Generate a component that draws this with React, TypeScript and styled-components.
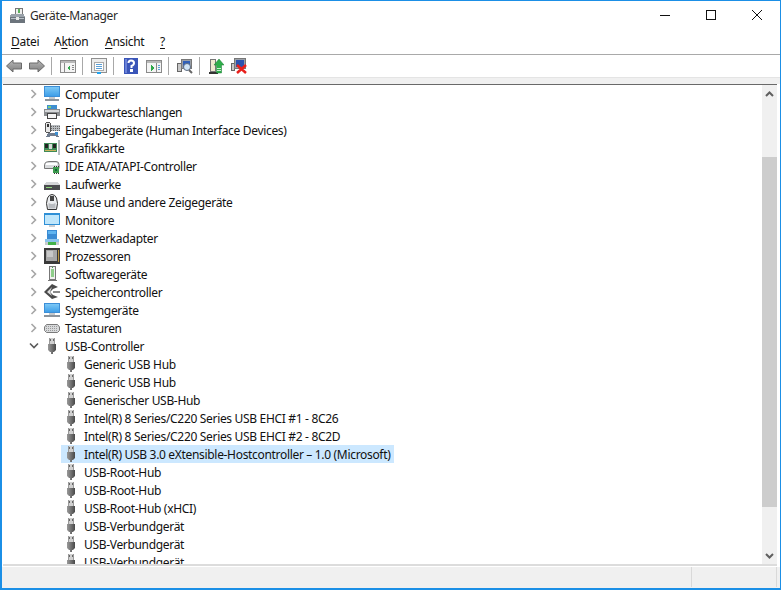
import React from "react";
import styled, { createGlobalStyle } from "styled-components";

const Global = createGlobalStyle`
  html, body { margin: 0; padding: 0; background: #fff; overflow: hidden; }
  #root { width: 781px; height: 590px; }
`;

const Window = styled.div`
  width: 781px; height: 590px; box-sizing: border-box;
  border: 1px solid #1b8fe6; border-width: 1px 1px 2px 2px;
  display: flex; flex-direction: column; background: #fff;
  font-family: "Noto Sans", "Open Sans", sans-serif; font-size: 12px; color: #000; overflow: hidden;
`;
const TitleBar = styled.div`
  height: 30px; flex: none; box-sizing: border-box; padding: 0 0 2px 7px; display: flex; align-items: center;
`;
const TitleText = styled.span`
  margin-left: 4px; color: #2b2b2b; flex: 1; letter-spacing: -0.38px;
`;
const WinButton = styled.div`
  width: 46px; height: 28px; display: flex; align-items: center; justify-content: center;
`;
const MenuBar = styled.div`
  height: 23px; flex: none; display: flex; align-items: center; border-bottom: 1px solid #a9a9a9; padding-left: 9px; padding-bottom: 1px; box-sizing: content-box; margin-top: -1px;
`;
const MenuItem = styled.span<{ $w: number }>`
  width: ${p => p.$w}px; letter-spacing: -0.3px; color: #111;
  u { text-underline-offset: 2px; }
`;
const ToolBar = styled.div`
  height: 22px; flex: none; display: flex; align-items: center; padding-left: 4px;
`;
const ToolIcon = styled.div<{ $ml?: number }>`
  width: 16px; height: 16px; margin-left: ${p => p.$ml ?? 0}px; display: flex;
`;
const ToolSep = styled.div<{ $ml: number }>`
  width: 1px; height: 18px; background: #a8a8a8; margin-left: ${p => p.$ml}px;
`;
const Strip = styled.div`
  height: 7px; flex: none; background: #f0f0f0; border-top: 1px solid #e4e4e4; box-sizing: border-box;
`;
const Body = styled.div`
  flex: 1; min-height: 0; display: flex; margin-left: 1px; margin-right: 3px;
  border-top: 1px solid #696969;
  border-bottom: 2px solid #dcdcdc;
`;
const Tree = styled.div`
  flex: 1; min-width: 0; overflow: hidden;
`;
const Row = styled.div<{ $child?: boolean }>`
  height: 18px; display: flex; align-items: center; white-space: nowrap;
  padding-left: ${p => (p.$child ? 58 : 23)}px;
`;
const Chevron = styled.div`
  width: 16px; height: 18px; flex: none; display: flex; align-items: center; justify-content: center;
`;
const RowBody = styled.div<{ $sel?: boolean }>`
  display: flex; align-items: center; height: 18px; padding-right: 4px;
  padding-left: 2px;
  background: ${p => (p.$sel ? "#cce8ff" : "transparent")};
`;
const RowIcon = styled.div`
  width: 17px; height: 16px; flex: none; display: flex;
`;
const Label = styled.span`
  margin-left: 4px; letter-spacing: -0.32px; color: #111;
`;
const ScrollBar = styled.div`
  width: 15px; flex: none; background: #f0f0f0; display: flex; flex-direction: column;
`;
const ScrollArrow = styled.div`
  height: 17px; flex: none; display: flex; align-items: center; justify-content: center;
`;
const ThumbGap = styled.div<{ $h: number }>`
  height: ${p => p.$h}px; flex: none;
`;
const Thumb = styled.div`
  flex: 1; background: #cdcdcd;
`;
const Status = styled.div`
  height: 22px; flex: none; background: #f0f0f0; border-top: 1px solid #fff; box-sizing: border-box; display: flex; justify-content: flex-end; padding-right: 3px;
`;
const StatusCell = styled.div<{ $w: number }>`
  width: ${p => p.$w}px; border-right: 1px solid #d9d9d9; border-left: 1px solid #d9d9d9; box-sizing: border-box; height: 20px;
`;

type P = { children: React.ReactNode };
const Ico = ({ children }: P) => (
  <svg width="16" height="16" viewBox="0 0 16 16" shapeRendering="crispEdges">{children}</svg>
);

const Defs = () => (
  <svg width="0" height="0" style={{ position: "absolute" }}>
    <defs>
      <linearGradient id="scr" x1="0" y1="0" x2="0" y2="1">
        <stop offset="0" stopColor="#7cc8f6" />
        <stop offset="1" stopColor="#3f9fe8" />
      </linearGradient>
      <linearGradient id="plug" x1="0" y1="0" x2="1" y2="0">
        <stop offset="0" stopColor="#9a9a9a" />
        <stop offset="0.5" stopColor="#727272" />
        <stop offset="1" stopColor="#484848" />
      </linearGradient>
      <linearGradient id="arrow" x1="0" y1="0" x2="0" y2="1">
        <stop offset="0" stopColor="#b8b8b8" />
        <stop offset="1" stopColor="#7e7e7e" />
      </linearGradient>
    </defs>
  </svg>
);

const icons: Record<string, React.ReactNode> = {
  computer: <><rect x="0" y="0" width="16" height="11" fill="#3c8fd8" /><rect x="1" y="1" width="14" height="9" fill="url(#scr)" /><rect x="5" y="11" width="6" height="2" fill="#c4c8cc" /><rect x="1" y="13" width="14" height="2" fill="#8c949c" /></>,
  printer: <><rect x="3" y="1" width="10" height="4" fill="#3f8fd0" /><rect x="4" y="2" width="3" height="2" fill="#7bd07b" /><rect x="0" y="5" width="16" height="7" fill="#8a8d90" /><rect x="1" y="6" width="14" height="2" fill="#d6d8da" /><rect x="3.500" y="9.500" width="9" height="5" fill="#f4f4f4" stroke="#444" strokeWidth="1" /></>,
  input: <><rect x="1.500" y="0.500" width="5" height="10" rx="2" fill="#e8e8e8" stroke="#555" /><rect x="3" y="2" width="2" height="3" fill="#333" /><rect x="7" y="3" width="9" height="6" fill="#b8bcc0" /><path d="M7 4.500h9M7 6.500h9M7 8.500h9" stroke="#666" strokeDasharray="1 1" /><path d="M4 11h9l2 4h-3l-1-1H6l-1 1H2z" fill="#6f7c8e" /><rect x="11" y="10" width="3" height="3" fill="#3f8fd0" /></>,
  gpu: <><rect x="0" y="3" width="13" height="9" fill="#3f8a58" /><rect x="1" y="4" width="3" height="4" fill="#222" /><rect x="5" y="4" width="3" height="5" fill="#d8d8d8" /><rect x="9" y="4" width="3" height="4" fill="#222" /><rect x="1" y="10" width="11" height="1" fill="#c9b45a" /><rect x="14" y="0" width="2" height="15" fill="#b8bcc0" /></>,
  ide: <><path d="M0.500 6.500 Q1 3.500 6 3.500 H12 Q15 3.500 15 6.500 V10.500 H0.500 Z" fill="#d8dadc" stroke="#777" shapeRendering="auto" /><rect x="2" y="5" width="11" height="2" fill="#fff" /><rect x="9" y="9" width="6" height="6" fill="#3c9a4e" /><path d="M10.500 9v-1M12.500 9v-1M14.500 9v-1M10.500 15v1M12.500 15v1M14.500 15v1" stroke="#333" /><rect x="11" y="11" width="2" height="2" fill="#163" /></>,
  drive: <><path d="M2 6h12l2 3H0z" fill="#d4d6d8" /><rect x="0" y="9" width="16" height="5" fill="#4a4c4e" /><rect x="2" y="11" width="6" height="1" fill="#8cd37a" /></>,
  mouse: <><path d="M3.500 15.500 Q1.500 9 3.500 4 Q5 0.500 8 0.500 Q11 0.500 12.500 4 Q14.500 9 12.500 15.500 Z" fill="#eceef0" stroke="#333" shapeRendering="auto" /><rect x="6" y="2" width="4" height="5" rx="1" fill="#444" /><path d="M4.500 9 Q8 11 11.500 9 V14.500 H4.500Z" fill="#b9bcc0" shapeRendering="auto" /></>,
  monitor: <><rect x="0" y="1" width="16" height="12" fill="#2e8fd6" /><rect x="1" y="3" width="14" height="9" fill="#bfe6fb" /><rect x="5" y="13" width="6" height="2" fill="#c9cdd1" /></>,
  network: <><rect x="3" y="0" width="10" height="9" fill="#3a8bd4" /><rect x="4" y="1" width="8" height="3" fill="#5fb4f0" /><rect x="1" y="9" width="14" height="3" fill="#8cc4ec" /><rect x="1" y="12" width="14" height="3" fill="#c8ccd0" /><rect x="4" y="12" width="8" height="3" fill="#43b24a" /></>,
  cpu: <><rect x="0" y="0" width="16" height="16" fill="#3a3a3a" /><rect x="2" y="2" width="11" height="11" fill="#a8a8a8" /><rect x="3" y="3" width="6" height="6" fill="#c8c8c8" /><rect x="14" y="2" width="1" height="12" fill="#b8923a" /></>,
  soft: <><rect x="5.500" y="0.500" width="6" height="13" fill="#f0f0f0" stroke="#777" /><rect x="7" y="3" width="3" height="8" fill="#8fce8a" /><rect x="8" y="1" width="1" height="1" fill="#4a4" /><rect x="4" y="14" width="9" height="1" fill="#777" /></>,
  storage: <><path d="M8 0 L14 3 L9 5 L6 8 L9 11 L14 13 L8 15 L0 8 Z" fill="#4a4a4a" shapeRendering="auto" /><rect x="9" y="7" width="7" height="2" fill="#8a8a8a" /><path d="M8 3 L3 8 L8 12 L6 8Z" fill="#ddd" shapeRendering="auto" /></>,
  system: <><rect x="0" y="1" width="16" height="10" fill="#3c8fd8" /><rect x="1" y="2" width="14" height="8" fill="url(#scr)" /><rect x="5" y="11" width="6" height="2" fill="#c4c8cc" /><rect x="0" y="13" width="16" height="2" fill="#8c949c" /></>,
  keyboard: <><path d="M2.500 4.500h11l2 2.500v3.500l-2 2h-11l-2-2V7z" fill="#d8dadc" stroke="#7a7a7a" shapeRendering="auto" /><path d="M2 6.500h12M2 8.500h12M2 10.500h12" stroke="#9a9a9a" strokeDasharray="1 1" /></>,
  usb: <><rect x="5" y="0" width="6" height="6" fill="#d0d0d0" /><rect x="5" y="0" width="1" height="6" fill="#9a9a9a" /><rect x="10" y="0" width="1" height="6" fill="#9a9a9a" /><rect x="6" y="1" width="1" height="2" fill="#666" /><rect x="9" y="1" width="1" height="2" fill="#666" /><path d="M4 6h8v6l-2 2H9v2H7v-2H6l-2-2z" fill="url(#plug)" shapeRendering="auto" /></>,
};

const tool: Record<string, React.ReactNode> = {
  back: <path d="M0.500 8 L7 2 V5 H15.500 V11 H7 V14 Z" fill="url(#arrow)" stroke="#6a6a6a" shapeRendering="auto" />,
  fwd: <path d="M15.500 8 L9 2 V5 H0.500 V11 H9 V14 Z" fill="url(#arrow)" stroke="#6a6a6a" shapeRendering="auto" />,
  paneL: <><rect x="0.500" y="2.500" width="15" height="12" fill="#f4f4f4" stroke="#8a8a8a" /><rect x="1" y="3" width="14" height="2" fill="#b8b8b8" /><rect x="4" y="5" width="1" height="9" fill="#8a8a8a" /><path d="M10 7v6l-3-3z" fill="#2fa84a" /><path d="M12 7h2M12 9h2M12 11h2" stroke="#888" /></>,
  props: <><rect x="0.500" y="0.500" width="15" height="14" fill="#eceded" stroke="#8f8f8f" /><rect x="3.500" y="4.500" width="9" height="8" fill="#fff" stroke="#aaa" /><path d="M5 6.500h6M5 8.500h6M5 10.500h6" stroke="#5aa0d8" /><rect x="6" y="14" width="4" height="2" fill="#1fa3f0" /></>,
  help: <><rect x="1" y="0" width="14" height="16" fill="#3a55b8" /><rect x="2" y="1" width="2" height="14" fill="#6a82d8" /><path d="M5.500 5 Q5.500 2.500 8 2.500 Q11 2.500 11 5 Q11 7 8.500 8 V10" fill="none" stroke="#fff" strokeWidth="2" shapeRendering="auto" /><rect x="7" y="11" width="3" height="3" fill="#fff" /></>,
  paneR: <><rect x="0.500" y="2.500" width="15" height="12" fill="#f4f4f4" stroke="#8a8a8a" /><rect x="1" y="3" width="14" height="2" fill="#b8b8b8" /><rect x="10" y="5" width="1" height="9" fill="#8a8a8a" /><path d="M5 7v6l3-3z" fill="#2fa84a" /><path d="M12 7h2M12 9h2M12 11h2" stroke="#5aa0d8" /></>,
  scan: <><rect x="0.500" y="5.500" width="4" height="8" fill="#c8c8c8" stroke="#666" /><rect x="4.500" y="1.500" width="10" height="9" fill="#9aa0a8" stroke="#777" /><rect x="6" y="3" width="7" height="6" fill="#2f5fb8" /><circle cx="10" cy="9" r="3.500" fill="#cfe4f7" stroke="#5a6a80" shapeRendering="auto" /><path d="M12 12l3 3" stroke="#666" strokeWidth="2" shapeRendering="auto" /></>,
  update: <><rect x="2.500" y="1.500" width="5" height="12" fill="#efe9cf" stroke="#777" /><rect x="1" y="14" width="9" height="2" fill="#333" /><path d="M11 1 L16 7 H13.500 V15 H8.500 V7 H6Z" fill="#2fae4a" stroke="#1a7a32" strokeWidth="0.5" shapeRendering="auto" /><path d="M9 10.500h4M9 12.500h4" stroke="#c8f0d0" /></>,
  remove: <><rect x="0.500" y="5.500" width="3" height="7" fill="#c8c8c8" stroke="#666" /><rect x="3.500" y="0.500" width="11" height="10" fill="#9aa0a8" stroke="#777" /><rect x="5" y="2" width="8" height="7" fill="#2a52b0" /><path d="M6 7l9 8M15 7l-9 8" stroke="#e8201c" strokeWidth="2.500" shapeRendering="auto" /></>,
};

const TitleIcon = () => (
  <svg width="17" height="17" viewBox="0 0 17 17" shapeRendering="crispEdges">
    <rect x="6.500" y="1.500" width="7" height="6" fill="#eee" stroke="#777" />
    <rect x="9" y="2" width="2" height="4" fill="#5aaf5a" />
    <path d="M2 7h13l1 3H1z" fill="#9aa2aa" />
    <rect x="1" y="10" width="15" height="6" fill="#6c747c" />
    <rect x="2" y="11" width="13" height="1" fill="#b8c0c8" />
    <rect x="7" y="10" width="3" height="3" fill="#e8e8e8" />
  </svg>
);

const ChevronRight = () => (
  <svg width="8" height="10" viewBox="0 0 8 10"><path d="M1.500 1 L5.500 5 L1.500 9" fill="none" stroke="#a6a6a6" strokeWidth="1.600" /></svg>
);
const ChevronDown = () => (
  <svg width="10" height="8" viewBox="0 0 10 8"><path d="M1 1.500 L5 5.500 L9 1.500" fill="none" stroke="#5a5a5a" strokeWidth="1.600" /></svg>
);

const categories: [string, string][] = [
  ["computer", "Computer"],
  ["printer", "Druckwarteschlangen"],
  ["input", "Eingabegeräte (Human Interface Devices)"],
  ["gpu", "Grafikkarte"],
  ["ide", "IDE ATA/ATAPI-Controller"],
  ["drive", "Laufwerke"],
  ["mouse", "Mäuse und andere Zeigegeräte"],
  ["monitor", "Monitore"],
  ["network", "Netzwerkadapter"],
  ["cpu", "Prozessoren"],
  ["soft", "Softwaregeräte"],
  ["storage", "Speichercontroller"],
  ["system", "Systemgeräte"],
  ["keyboard", "Tastaturen"],
];

const usbDevices = [
  "Generic USB Hub",
  "Generic USB Hub",
  "Generischer USB-Hub",
  "Intel(R) 8 Series/C220 Series USB EHCI #1 - 8C26",
  "Intel(R) 8 Series/C220 Series USB EHCI #2 - 8C2D",
  "Intel(R) USB 3.0 eXtensible-Hostcontroller – 1.0 (Microsoft)",
  "USB-Root-Hub",
  "USB-Root-Hub",
  "USB-Root-Hub (xHCI)",
  "USB-Verbundgerät",
  "USB-Verbundgerät",
  "USB-Verbundgerät",
];

export default function App() {
  return (
    <Window>
      <Global />
      <Defs />
      <TitleBar>
        <TitleIcon />
        <TitleText>Geräte-Manager</TitleText>
        <WinButton>
          <svg width="10" height="10" viewBox="0 0 10 10" shapeRendering="crispEdges"><rect x="0" y="5" width="10" height="1" fill="#111" /></svg>
        </WinButton>
        <WinButton>
          <svg width="10" height="10" viewBox="0 0 10 10" shapeRendering="crispEdges"><rect x="0.500" y="0.500" width="9" height="9" fill="none" stroke="#111" /></svg>
        </WinButton>
        <WinButton>
          <svg width="10" height="10" viewBox="0 0 10 10"><path d="M0 0 L10 10 M10 0 L0 10" stroke="#111" strokeWidth="1" /></svg>
        </WinButton>
      </TitleBar>
      <MenuBar>
        <MenuItem $w={43}><u>D</u>atei</MenuItem>
        <MenuItem $w={51}>A<u>k</u>tion</MenuItem>
        <MenuItem $w={55}><u>A</u>nsicht</MenuItem>
        <MenuItem $w={10}><u>?</u></MenuItem>
      </MenuBar>
      <ToolBar>
        <ToolIcon><Ico>{tool.back}</Ico></ToolIcon>
        <ToolIcon $ml={7}><Ico>{tool.fwd}</Ico></ToolIcon>
        <ToolSep $ml={6} />
        <ToolIcon $ml={8}><Ico>{tool.paneL}</Ico></ToolIcon>
        <ToolSep $ml={6} />
        <ToolIcon $ml={8}><Ico>{tool.props}</Ico></ToolIcon>
        <ToolSep $ml={6} />
        <ToolIcon $ml={9}><Ico>{tool.help}</Ico></ToolIcon>
        <ToolIcon $ml={7}><Ico>{tool.paneR}</Ico></ToolIcon>
        <ToolSep $ml={6} />
        <ToolIcon $ml={8}><Ico>{tool.scan}</Ico></ToolIcon>
        <ToolSep $ml={6} />
        <ToolIcon $ml={8}><Ico>{tool.update}</Ico></ToolIcon>
        <ToolIcon $ml={7}><Ico>{tool.remove}</Ico></ToolIcon>
      </ToolBar>
      <Strip />
      <Body>
        <Tree>
          {categories.map(([k, t]) => (
            <Row key={t}>
              <Chevron><ChevronRight /></Chevron>
              <RowBody>
                <RowIcon><Ico>{icons[k]}</Ico></RowIcon>
                <Label>{t}</Label>
              </RowBody>
            </Row>
          ))}
          <Row>
            <Chevron><ChevronDown /></Chevron>
            <RowBody>
              <RowIcon><Ico>{icons.usb}</Ico></RowIcon>
              <Label>USB-Controller</Label>
            </RowBody>
          </Row>
          {usbDevices.map((t, i) => (
            <Row $child key={i}>
              <RowBody $sel={i === 5}>
                <RowIcon><Ico>{icons.usb}</Ico></RowIcon>
                <Label>{t}</Label>
              </RowBody>
            </Row>
          ))}
        </Tree>
        <ScrollBar>
          <ScrollArrow>
            <svg width="9" height="6" viewBox="0 0 9 6"><path d="M1 5 L4.500 1.500 L8 5" fill="none" stroke="#606060" strokeWidth="2" /></svg>
          </ScrollArrow>
          <ThumbGap $h={55} />
          <Thumb />
          <ThumbGap $h={40} />
          <ScrollArrow>
            <svg width="9" height="6" viewBox="0 0 9 6"><path d="M1 1 L4.500 4.500 L8 1" fill="none" stroke="#606060" strokeWidth="2" /></svg>
          </ScrollArrow>
        </ScrollBar>
      </Body>
      <Status>
        <StatusCell $w={86} />
      </Status>
    </Window>
  );
}
